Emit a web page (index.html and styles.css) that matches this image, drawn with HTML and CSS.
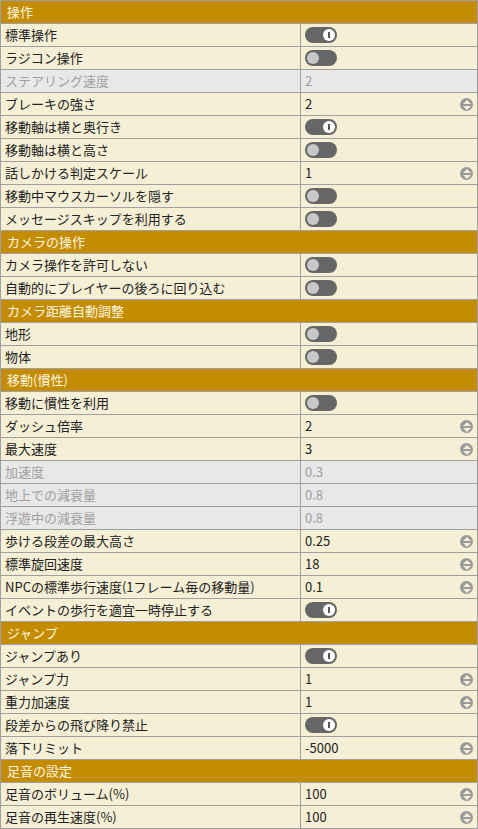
FILE: index.html
```html
<!DOCTYPE html>
<html lang="ja">
<head>
    <meta charset="UTF-8">
    <meta name="viewport" content="width=device-width, initial-scale=1.0">
    <title>操作設定</title>
    <link rel="stylesheet" href="styles.css">
</head>
<body>
    <table class="prop-table">
        <colgroup><col class="col-name"><col class="col-value"></colgroup>
        <tbody>
            <tr class="section"><td colspan="2">操作</td></tr>
            <tr><td>標準操作</td><td><span class="toggle on"></span></td></tr>
            <tr><td>ラジコン操作</td><td><span class="toggle"></span></td></tr>
            <tr class="disabled"><td>ステアリング速度</td><td>2</td></tr>
            <tr><td>ブレーキの強さ</td><td class="num">2<span class="spin"></span></td></tr>
            <tr><td>移動軸は横と奥行き</td><td><span class="toggle on"></span></td></tr>
            <tr><td>移動軸は横と高さ</td><td><span class="toggle"></span></td></tr>
            <tr><td>話しかける判定スケール</td><td class="num">1<span class="spin"></span></td></tr>
            <tr><td>移動中マウスカーソルを隠す</td><td><span class="toggle"></span></td></tr>
            <tr><td>メッセージスキップを利用する</td><td><span class="toggle"></span></td></tr>

            <tr class="section"><td colspan="2">カメラの操作</td></tr>
            <tr><td>カメラ操作を許可しない</td><td><span class="toggle"></span></td></tr>
            <tr><td>自動的にプレイヤーの後ろに回り込む</td><td><span class="toggle"></span></td></tr>

            <tr class="section"><td colspan="2">カメラ距離自動調整</td></tr>
            <tr><td>地形</td><td><span class="toggle"></span></td></tr>
            <tr><td>物体</td><td><span class="toggle"></span></td></tr>

            <tr class="section"><td colspan="2">移動(慣性)</td></tr>
            <tr><td>移動に慣性を利用</td><td><span class="toggle"></span></td></tr>
            <tr><td>ダッシュ倍率</td><td class="num">2<span class="spin"></span></td></tr>
            <tr><td>最大速度</td><td class="num">3<span class="spin"></span></td></tr>
            <tr class="disabled"><td>加速度</td><td>0.3</td></tr>
            <tr class="disabled"><td>地上での減衰量</td><td>0.8</td></tr>
            <tr class="disabled"><td>浮遊中の減衰量</td><td>0.8</td></tr>
            <tr><td>歩ける段差の最大高さ</td><td class="num">0.25<span class="spin"></span></td></tr>
            <tr><td>標準旋回速度</td><td class="num">18<span class="spin"></span></td></tr>
            <tr><td>NPCの標準歩行速度(1フレーム毎の移動量)</td><td class="num">0.1<span class="spin"></span></td></tr>
            <tr><td>イベントの歩行を適宜一時停止する</td><td><span class="toggle on"></span></td></tr>

            <tr class="section"><td colspan="2">ジャンプ</td></tr>
            <tr><td>ジャンプあり</td><td><span class="toggle on"></span></td></tr>
            <tr><td>ジャンプ力</td><td class="num">1<span class="spin"></span></td></tr>
            <tr><td>重力加速度</td><td class="num">1<span class="spin"></span></td></tr>
            <tr><td>段差からの飛び降り禁止</td><td><span class="toggle on"></span></td></tr>
            <tr><td>落下リミット</td><td class="num">-5000<span class="spin"></span></td></tr>

            <tr class="section"><td colspan="2">足音の設定</td></tr>
            <tr><td>足音のボリューム(%)</td><td class="num">100<span class="spin"></span></td></tr>
            <tr><td>足音の再生速度(%)</td><td class="num">100<span class="spin"></span></td></tr>
        </tbody>
    </table>
</body>
</html>
```

FILE: styles.css
```css
body { margin: 0; background: #f5efd5; font-family: "Noto Sans CJK JP", "Noto Sans", sans-serif; font-size: 13px; color: #222; }
.prop-table { width: 478px; border-collapse: collapse; table-layout: fixed; }
.col-name { width: 300px; }
.prop-table td { height: 22px; padding: 0 4px; border: 1px solid #a0a0a0; background: #f5efd5; line-height: 22px; white-space: nowrap; overflow: hidden; vertical-align: middle; }
.prop-table td.num { position: relative; }
.section td { background: #c48c00; color: #fff6e0; padding-left: 6px; }
.disabled td { background: #e8e8e8; color: #a0a0a0; }

/* on/off switch */
.toggle { display: inline-block; position: relative; width: 32px; height: 16px; border-radius: 8px; background: #666; vertical-align: middle; margin-top: -2px; }
.toggle::after { content: ""; position: absolute; left: 2px; top: 2px; width: 12px; height: 12px; border-radius: 50%; background: #c8c8c8; }
.toggle.on::after { left: auto; right: 2px; background: #fff; }
.toggle.on::before { content: ""; position: absolute; right: 7px; top: 5px; width: 2px; height: 6px; background: #555; z-index: 1; }

/* up/down spinner */
.spin { position: absolute; right: 4px; top: 5px; width: 13px; height: 13px; border-radius: 50%; background: #999; }
.spin::before, .spin::after { content: ""; position: absolute; left: 2.5px; border-left: 4px solid transparent; border-right: 4px solid transparent; }
.spin::before { top: 1.5px; border-bottom: 4px solid #f5efd5; }
.spin::after { bottom: 1.5px; border-top: 4px solid #f5efd5; }
```
